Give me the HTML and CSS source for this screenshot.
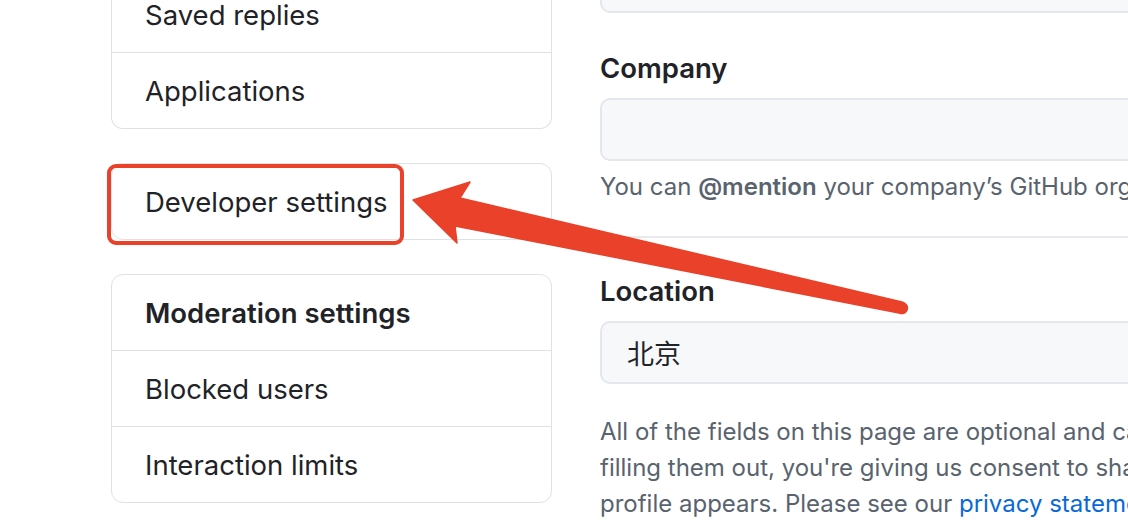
FILE: index.html
```html
<!DOCTYPE html>
<html lang="en">
<head>
<meta charset="utf-8">
<title>Settings</title>
<link rel="stylesheet" href="styles.css">
</head>
<body>
<div class="page">
  <aside class="sidebar">
    <nav class="nav-box nav-box-first">
      <a class="nav-item">Saved replies</a>
      <a class="nav-item">Applications</a>
    </nav>
    <nav class="nav-box">
      <a class="nav-item highlighted">Developer settings<span class="highlight-ring"></span></a>
    </nav>
    <nav class="nav-box">
      <div class="nav-item nav-heading">Moderation settings</div>
      <a class="nav-item">Blocked users</a>
      <a class="nav-item">Interaction limits</a>
    </nav>
  </aside>
  <main class="content">
    <div class="field field-first">
      <div class="input"></div>
    </div>
    <div class="field">
      <label class="label">Company</label>
      <div class="input"></div>
      <p class="note">You can <strong>@mention</strong> your company’s GitHub organization to link it.</p>
    </div>
    <hr class="rule">
    <div class="field">
      <label class="label">Location</label>
      <div class="input"><span class="input-value">北京</span></div>
    </div>
    <p class="info">All of the fields on this page are optional and can be deleted at any time, and by<br>filling them out, you're giving us consent to share this data wherever your user<br>profile appears. Please see our <a class="link">privacy statement</a> to learn more about how we use this information.</p>
  </main>
</div>
<svg class="annotation" width="1128" height="528" viewBox="0 0 1128 528" aria-hidden="true">
  <path d="M413 200 L470 182 L460 198 L902 302 Q909 305 907 310 Q905 315 899 313 L455 226 L457 243 Z" fill="#e9412a" stroke="#e9412a" stroke-width="1.5" stroke-linejoin="round"/>
</svg>
</body>
</html>
```

FILE: styles.css
```css
html, body {
  margin: 0;
  padding: 0;
  background: #ffffff;
  overflow: hidden;
  width: 1128px;
  height: 528px;
}

body {
  font-family: Inter, "Liberation Sans", "Noto Sans CJK SC", sans-serif;
  color: #1f2328;
  position: relative;
}

.page {
  display: flex;
  gap: 48px;
  padding-left: 111px;
}

.sidebar {
  width: 441px;
  flex: none;
  display: flex;
  flex-direction: column;
  gap: 34px;
}

.nav-box {
  border: 1px solid #dde2e7;
  border-radius: 12px;
  display: flex;
  flex-direction: column;
}

.nav-box-first {
  margin-top: -24px;
  border-top-color: transparent;
}

.nav-item {
  position: relative;
  height: 75px;
  display: flex;
  align-items: center;
  padding-left: 33px;
  padding-top: 1px;
  box-sizing: border-box;
  font-size: 27.5px;
  color: #1f2328;
  text-decoration: none;
}

.nav-item + .nav-item {
  border-top: 1px solid #dde2e7;
  height: 76px;
}

.nav-heading {
  font-weight: 600;
}

.highlight-ring {
  position: absolute;
  left: -5px;
  top: 0;
  width: 289px;
  height: 73px;
  border: 4px solid #e9412a;
  border-radius: 9px;
}

.content {
  width: 1100px;
  flex: none;
}

.field-first {
  margin-top: -50px;
}

.field {
  display: flex;
  flex-direction: column;
}

.label {
  font-size: 27.5px;
  font-weight: 600;
  line-height: 36px;
  margin-top: 37px;
  margin-bottom: 12px;
}

.input {
  box-sizing: border-box;
  height: 63px;
  border: 2px solid #e4e7eb;
  border-radius: 10px;
  background: #f6f8fa;
  display: flex;
  align-items: center;
  padding-left: 25px;
}

.input-value {
  font-family: "Noto Sans CJK SC", sans-serif;
  font-size: 27px;
  color: #1f2328;
}

.note {
  margin: 8px 0 0;
  font-size: 24px;
  line-height: 36px;
  color: #59636e;
  white-space: nowrap;
}

.note strong {
  font-weight: 600;
}

.rule {
  border: none;
  border-top: 2px solid #e8ebee;
  margin: 31px 0 0;
}

.rule + .field .label {
  margin-top: 35px;
}

.info {
  margin: 30px 0 0;
  font-size: 24px;
  line-height: 36px;
  color: #59636e;
  white-space: nowrap;
}

.link {
  color: #0969da;
  text-decoration: none;
}

.annotation {
  position: absolute;
  left: 0;
  top: 0;
  pointer-events: none;
}
```
